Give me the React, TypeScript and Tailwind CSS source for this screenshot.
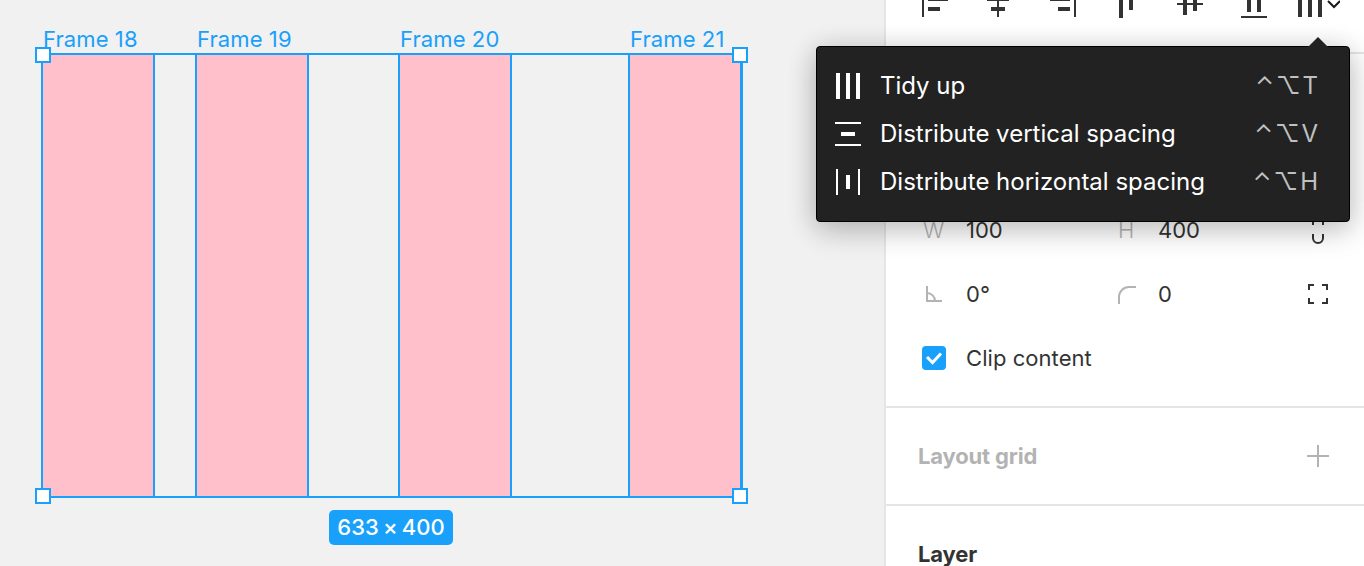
import type { ReactNode } from "react";

const frames = [
  { name: "Frame 18", box: "left-[41px]", label: "left-[43px]" },
  { name: "Frame 19", box: "left-[195px]", label: "left-[197px]" },
  { name: "Frame 20", box: "left-[398px]", label: "left-[400px]" },
  { name: "Frame 21", box: "left-[628px]", label: "left-[630px]" },
];

const handles = [
  "left-[35px] top-[47px]",
  "left-[732px] top-[47px]",
  "left-[35px] top-[488px]",
  "left-[732px] top-[488px]",
];

function Canvas() {
  return (
    <main className="relative w-[884px] shrink-0 overflow-hidden bg-[#f1f1f1]">
      {frames.map((f) => (
        <div key={f.name}>
          <span
            className={`absolute top-[25px] text-[22px] leading-7 tracking-[0.1px] whitespace-nowrap text-[#18a0fb] ${f.label}`}
          >
            {f.name}
          </span>
          <div
            className={`absolute top-[53px] h-[445px] w-[114px] border-2 border-[#18a0fb] bg-[#ffc0cb] ${f.box}`}
          />
        </div>
      ))}
      <div className="absolute top-[53px] left-[41px] h-[445px] w-[702px] border-2 border-[#18a0fb]" />
      {handles.map((h) => (
        <div key={h} className={`absolute size-4 border-2 border-[#18a0fb] bg-white ${h}`} />
      ))}
      <div className="absolute top-[510px] left-[329px] flex h-[35px] w-[124px] items-center justify-center rounded-[5px] bg-[#18a0fb] text-[22px] font-medium tracking-[0.1px] whitespace-nowrap text-white [word-spacing:-2px]">
        633 × 400
      </div>
    </main>
  );
}

function AlignIcon({ d }: { d: string }) {
  return (
    <svg width="32" height="18" viewBox="0 0 32 18" className="shrink-0" fill="#333">
      <path d={d} />
    </svg>
  );
}

const alignIcons = [
  "M4 0h2v17H4zM10 0h20v1H10zM10 7h12v4H10z",
  "M5 0h22v1H5zM9 7h14v4H9zM15 0h2v17h-2z",
  "M4 0h20v1H4zM12 7h12v4H12zM28 0h2v17h-2z",
  "M9 0h4v18H9zM19 0h4v10h-4z",
  "M3 3h26v2H3zM9 0h4v15H9zM19 0h4v11h-4z",
  "M9 0h4v12H9zM19 0h4v12h-4zM3 16h26v2H3z",
];

function Toolbar() {
  return (
    <div className="flex h-[54px] shrink-0 items-start gap-8 border-b-2 border-[#e5e5e5] pl-8">
      {alignIcons.map((d) => (
        <AlignIcon key={d} d={d} />
      ))}
      <svg width="50" height="18" viewBox="-6 0 50 18" className="-ml-3 shrink-0" fill="#333">
        <path d="M2 0h4v17H2zM12 0h4v17h-4zM22 0h4v17h-4z" />
        <path d="M32 1l6 6 6-6" fill="none" stroke="#1a1a1a" strokeWidth="2" />
      </svg>
    </div>
  );
}

function FieldRow({ a, av, b, bv, action }: { a: ReactNode; av: string; b: ReactNode; bv: string; action: ReactNode }) {
  return (
    <div className="flex h-16 items-center">
      <div className="w-11 text-[#b3b3b3]">{a}</div>
      <div className="w-[152px]">{av}</div>
      <div className="w-10 text-[#b3b3b3]">{b}</div>
      <div className="w-[148px]">{bv}</div>
      {action}
    </div>
  );
}

function Sidebar() {
  return (
    <aside className="flex w-[480px] shrink-0 flex-col border-l-2 border-[#e5e5e5] bg-white text-[22px] text-[#333]">
      <Toolbar />
      <section className="h-[354px] shrink-0 border-b-2 border-[#e5e5e5] pt-36 pl-9">
        <FieldRow
          a={<span className="pl-px font-light">W</span>}
          av="100"
          b={<span className="font-light">H</span>}
          bv="400"
          action={
            <svg width="24" height="32" viewBox="0 0 24 32" fill="none" stroke="#333" strokeWidth="2">
              <path d="M7 11V7a5 5 0 0 1 10 0v4M7 20v4a5 5 0 0 0 10 0v-4" />
            </svg>
          }
        />
        <FieldRow
          a={
            <svg width="24" height="24" viewBox="0 0 24 24" fill="none" stroke="#b3b3b3" strokeWidth="2">
              <path d="M5 4v15h15M5 11a8 8 0 0 1 8 8" />
            </svg>
          }
          av="0°"
          b={
            <svg width="24" height="24" viewBox="0 0 24 24" fill="none" stroke="#b3b3b3" strokeWidth="2">
              <path d="M1 22v-7A10 10 0 0 1 11 5h7" />
            </svg>
          }
          bv="0"
          action={
            <svg width="24" height="24" viewBox="0 0 24 24" fill="none" stroke="#333" strokeWidth="2">
              <path d="M3 8V3h5M16 3h5v5M21 16v5h-5M8 21H3v-5" />
            </svg>
          }
        />
        <div className="flex h-16 items-center gap-5">
          <span className="flex size-6 items-center justify-center rounded-[4px] bg-[#18a0fb]">
            <svg width="24" height="24" viewBox="0 0 24 24" fill="none" stroke="#fff" strokeWidth="3">
              <path d="M5 11l5.5 5.5L19 7.5" />
            </svg>
          </span>
          <span className="tracking-[0.06px]">Clip content</span>
        </div>
      </section>
      <section className="flex h-[98px] shrink-0 items-center justify-between border-b-2 border-[#e5e5e5] pr-[35px] pl-8 font-bold tracking-[-0.16px] text-[#b3b3b3]">
        Layout grid
        <svg width="22" height="22" viewBox="0 0 22 22" fill="#b3b3b3">
          <path d="M10 0h2v10h10v2H12v10h-2V12H0v-2h10z" />
        </svg>
      </section>
      <section className="flex h-24 shrink-0 items-center pl-8 font-bold tracking-[-0.16px]">Layer</section>
    </aside>
  );
}

const menuItems = [
  {
    label: "Tidy up",
    key: "T",
    icon: "M4 3h4v26H4zM14 3h4v26h-4zM24 3h4v26h-4z",
  },
  {
    label: "Distribute vertical spacing",
    key: "V",
    icon: "M3 4h26v2H3zM3 26h26v2H3zM9 14h14v4H9z",
  },
  {
    label: "Distribute horizontal spacing",
    key: "H",
    icon: "M4 3h2v26H4zM26 3h2v26h-2zM14 9h4v14h-4z",
  },
];

function Menu() {
  return (
    <div className="absolute top-[46px] left-[816px] h-[176px] w-[534px] rounded-[4px] border border-black bg-[#222] pt-[15px] pr-[29px] pl-[15px] text-2xl text-white shadow-[0_4px_28px_rgba(0,0,0,0.2),0_10px_32px_rgba(0,0,0,0.12)]">
      <svg width="20" height="10" viewBox="0 0 20 10" className="absolute -top-[10px] left-[491px]">
        <path d="M0 10L10 0l10 10z" fill="#222" />
      </svg>
      {menuItems.map((m) => (
        <div key={m.key} className="flex h-12 items-center">
          <svg width="32" height="32" viewBox="0 0 32 32" fill="#fff" className="mr-4 shrink-0">
            <path d={m.icon} />
          </svg>
          <span className="grow whitespace-nowrap">{m.label}</span>
          <span className="tracking-[2px] text-[#c0c0c0]">⌃⌥{m.key}</span>
        </div>
      ))}
    </div>
  );
}

export default function App() {
  return (
    <div className="relative flex h-[566px] w-[1364px] overflow-hidden font-['Inter',sans-serif]">
      <Canvas />
      <Sidebar />
      <Menu />
    </div>
  );
}
